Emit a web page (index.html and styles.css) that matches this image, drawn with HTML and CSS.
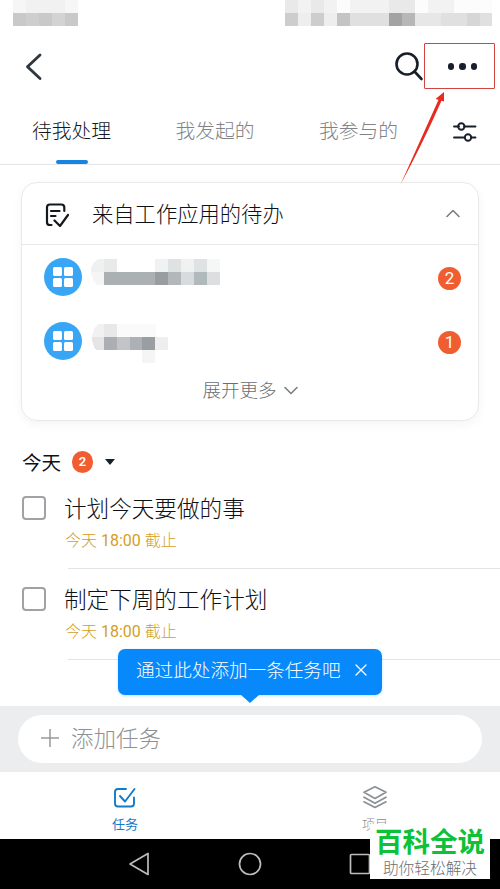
FILE: index.html
```html
<!DOCTYPE html>
<html lang="zh-CN">
<head>
<meta charset="utf-8">
<title>任务</title>
<link rel="stylesheet" href="styles.css">
</head>
<body>
<main class="phone">
  <header class="status">
    <svg class="status-left" width="65" height="26" shape-rendering="crispEdges">
      <path fill="#f6f6f6" d="M0 0h13v13H0zM52 0h13v13H52z"/><path fill="#f1f1f1" d="M13 0h39v13H13z"/>
      <path fill="#c9c9c9" d="M0 13h65v13H0z"/><path fill="#cecece" d="M13 13h13v13H13z"/><path fill="#d3d3d3" d="M39 13h13v13H39z"/>
    </svg>
    <svg class="status-right" width="207" height="26" shape-rendering="crispEdges">
      <path fill="#f2f2f2" d="M0 0h207v13H0z"/><path fill="#e9e9e9" d="M0 0h13v13H0zM26 0h13v13H26zM104 0h26v13h-26z"/><path fill="#fcfcfc" d="M52 0h13v13H52zM130 0h13v13h-13zM169 0h38v13h-38z"/>
      <path fill="#e0e0e0" d="M65 13h142v13H65z"/><path fill="#eee" d="M13 13h13v13H13zM39 13h13v13H39z"/><path fill="#cdcdcd" d="M0 13h13v13H0zM26 13h13v13H26z"/>
      <path fill="#c4c4c4" d="M52 13h13v13H52z"/><path fill="#a3a3a3" d="M104 13h13v13h-13z"/><path fill="#b7b7b7" d="M117 13h13v13h-13z"/><path fill="#e7e7e7" d="M130 13h26v13h-26z"/><path fill="#d6d6d6" d="M182 13h13v13h-13z"/>
    </svg>
  </header>

  <nav class="toolbar">
    <svg class="back" width="20" height="30" viewBox="0 0 20 30"><path d="M15 3 2.500 14.700 15 26.500"/></svg>
    <div class="actions">
      <svg class="search" width="30" height="30" viewBox="0 0 30 30"><circle cx="13" cy="13" r="10.500"/><path d="m20.500 20.500 7 7.500"/></svg>
      <div class="more"><i></i><i></i><i></i></div>
    </div>
    <svg class="arrow" width="50" height="96" viewBox="0 0 50 96"><path d="M44 26 35.500 33 38.500 33.700Q20 75 .5 118.500 23 77 41.500 34.800L44 35.500Z" transform="translate(0 -26)"/></svg>
  </nav>

  <div class="tabs">
    <span class="tab active">待我处理</span>
    <span class="tab">我发起的</span>
    <span class="tab">我参与的</span>
    <svg class="filter" width="24" height="24" viewBox="0 0 24 24"><path d="M1 6.500h5M11 6.500h11.500M1 17.500h10.500M18 17.500h4.500"/><circle cx="8.300" cy="6.500" r="3.200"/><circle cx="15" cy="17.500" r="3.200"/></svg>
  </div>

  <section class="card">
    <div class="card-head">
      <svg class="todo" width="24" height="26" viewBox="0 0 24 26"><path d="M6.500 23H4.800Q2 23 2 20.200V5.300Q2 2.500 4.800 2.500H16.300Q19.300 2.500 19.300 5.300V9M6 9h8.500M6 14h4.500M9.500 18.500l5.500 5.500L23 13"/></svg>
      <h1>来自工作应用的待办</h1>
      <svg class="chev" width="14" height="9" viewBox="0 0 14 9"><path d="M1 7.500 7 1.500l6 6"/></svg>
    </div>
    <div class="app">
      <span class="app-icon"><i></i><i></i><i></i><i></i></span>
      <svg class="mosaic" width="129" height="39" viewBox="0 0 129 39" shape-rendering="crispEdges">
        <path fill="#eff0f0" d="M13 0H8Q0 3 0 13h13z"/><path fill="#f5f5f5" d="M0 13h13v13H6Q1 22 0 13z"/><path fill="#e8e9e9" d="M13 0h13v13H13z"/><path fill="#f0f1f1" d="M64 0h13v13H64zM90 0h13v13H90z"/><path fill="#dfe2e3" d="M77 0h13v13H77zM103 0h13v13h-13z"/><path fill="#f5f6f6" d="M116 0h13v13h-13z"/>
        <path fill="#abb0b3" d="M13 13h51v13H13z"/><path fill="#999d9f" d="M64 13h13v13H64z"/><path fill="#b2b7ba" d="M77 13h13v13H77z"/><path fill="#d7dbdd" d="M90 13h13v13H90z"/><path fill="#b0babd" d="M103 13h13v13h-13z"/><path fill="#dcdedf" d="M116 13h13v13h-13z"/>
      </svg>
      <b class="count">2</b>
    </div>
    <div class="app">
      <span class="app-icon"><i></i><i></i><i></i><i></i></span>
      <svg class="mosaic second" width="129" height="39" viewBox="0 0 129 39" shape-rendering="crispEdges">
        <path fill="#f1f1f1" d="M13 0H8Q2 3 1 13h12z"/><path fill="#e8e8e8" d="M13 0h13v13H13z"/><path fill="#fafafa" d="M26 0h39v13H26z"/>
        <path fill="#e5e5e6" d="M1 13h12v13H5Q1 21 1 13z"/><path fill="#abaeb2" d="M13 13h13v13H13z"/><path fill="#c2c4c7" d="M26 13h13v13H26z"/><path fill="#adb0b4" d="M39 13h12v13H39z"/><path fill="#9a9da2" d="M51 13h13v13H51z"/><path fill="#eee" d="M64 13h13v13H64z"/><path fill="#f5f5f6" d="M51 26h13v13H51z"/>
      </svg>
      <b class="count">1</b>
    </div>
    <div class="expand">展开更多<svg class="chev" width="14" height="9" viewBox="0 0 14 9"><path d="m1 1.500 6 6 6-6"/></svg></div>
  </section>

  <section class="tasks">
    <div class="today"><h2>今天</h2><b class="today-count">2</b><i class="caret"></i></div>
    <article class="task"><i class="box"></i><div class="task-body"><h3>计划今天要做的事</h3><p>今天 <span>18:00</span> 截止</p></div></article>
    <article class="task"><i class="box"></i><div class="task-body"><h3>制定下周的工作计划</h3><p>今天 <span>18:00</span> 截止</p></div></article>
  </section>

  <section class="composer">
    <div class="input"><svg width="20" height="20" viewBox="0 0 20 20"><path d="M10 1v18M1 10h18"/></svg><span>添加任务</span></div>
    <div class="tip">通过此处添加一条任务吧<svg width="12" height="12" viewBox="0 0 12 12"><path d="m1 1 10 10M11 1 1 11"/></svg></div>
  </section>

  <nav class="bottom">
    <div class="item on"><svg width="26" height="26" viewBox="0 0 26 26"><path d="M14 4H6Q3 4 3 7v11.500Q3 21.500 6 21.500H19Q22 21.500 22 18.500V12.500M8 11l5 5.500L22.500 4"/></svg>任务</div>
    <div class="item"><svg width="26" height="26" viewBox="0 0 26 26"><path d="M13 1.800 24 7.300 13 13.500 2 7.300ZM2 12.200l11 6 11-6M2 16.800l11 5.700 11-5.700"/></svg>项目</div>
  </nav>

  <footer class="system">
    <svg width="24" height="24" viewBox="0 0 24 24"><path d="M20 1.500v21L2 12Z"/></svg>
    <svg width="24" height="24" viewBox="0 0 24 24"><circle cx="12" cy="12" r="10.500"/></svg>
    <svg width="24" height="24" viewBox="0 0 24 24"><rect x="2.500" y="2.500" width="19" height="19" rx="1"/></svg>
    <div class="mark"><strong>百科全说</strong><span>助你轻松解决</span></div>
  </footer>
</main>
</body>
</html>
```

FILE: styles.css
```css
* { box-sizing: border-box; }
body { margin: 0; background: #fff; font-family: Roboto, "Noto Sans CJK SC", sans-serif; font-weight: 300; color: #0d1116; }
h1, h2, h3, p { margin: 0; font-weight: inherit; }
svg { display: block; flex: none; fill: none; stroke-linecap: round; stroke-linejoin: round; }
.phone { width: 500px; height: 889px; display: flex; flex-direction: column; overflow: hidden; }

.status { height: 26px; display: flex; justify-content: space-between; padding: 0 8px 0 13px; }
.toolbar { position: relative; height: 78px; display: flex; justify-content: space-between; padding: 17px 5px 0 25px; }
.back { margin-top: 9px; stroke: #30373d; stroke-width: 2.9; }
.actions { display: flex; }
.search { margin-top: 8px; stroke: #17202a; stroke-width: 2.6; }
.more { width: 71px; height: 46px; border: 1.500px solid #d24440; border-radius: 1px; display: flex; align-items: center; justify-content: center; gap: 5px; padding: 1px 0 0 6px; }
.more i { width: 6.500px; height: 6.500px; border-radius: 50%; background: #17202a; }
.arrow { position: absolute; left: 400px; top: 66px; z-index: 3; }
.arrow path { fill: #e62b20; }

.tabs { height: 61px; border-bottom: 1px solid #e5e6e7; display: flex; padding: 0 24px 0 32px; font-size: 19.800px; line-height: 56px; }
.tab { width: 79.200px; margin-right: 64.300px; color: #808387; white-space: nowrap; }
.tab.active { color: #14191e; display: flex; flex-direction: column; align-items: center; }
.tab.active::after { content: ""; width: 32px; height: 4px; border-radius: 2px; background: #1785df; margin-top: 0; }
.filter { margin: 16px 0 0 -9px; stroke: #17202a; stroke-width: 1.900; }

.card { width: 458px; height: 239px; margin: 17px 0 0 21px; border: 1.500px solid #e8e9eb; border-radius: 16px; box-shadow: 0 3px 10px rgba(30, 40, 50, .05); }
.card-head { height: 62px; border-bottom: 1px solid #e7e8e9; display: flex; align-items: center; padding: 0 18px 0 23px; }
.todo { margin-top: 3px; stroke: #14191d; stroke-width: 2.200; }
.card-head h1 { font-size: 21.300px; margin: -2px 0 0 23px; flex: 1; }
.chev { stroke: #777b80; stroke-width: 1.500; }
.app { height: 64px; display: flex; align-items: center; padding: 0 17px 0 22px; }
.app-icon { width: 38px; height: 38px; border-radius: 50%; background: #38a6f5; display: grid; grid-template-columns: 9px 9px; grid-auto-rows: 9px; gap: 1.500px; place-content: center; }
.app-icon i { background: #fff; border-radius: 1.500px; }
.mosaic { margin: 3px auto 0 9px; }
.mosaic.second { margin-top: 5px; }
.count { width: 23px; height: 23px; margin-top: 3px; border-radius: 50%; background: #f05d30; color: #fff; font-size: 17px; font-weight: 400; line-height: 23px; text-align: center; }
.expand { display: flex; align-items: center; justify-content: center; gap: 7px; height: 32px; color: #6a6d71; font-size: 18.500px; }
.expand .chev { margin-top: 4px; }

.tasks { height: 286px; padding: 25px 0 0 22px; }
.today { height: 32px; display: flex; align-items: center; }
.today h2 { font-size: 19.500px; font-weight: 400; }
.today-count { width: 21px; height: 22px; margin-left: 11px; border-radius: 10.500px; background: #f05d30; color: #fff; font-size: 13px; font-weight: 600; line-height: 22px; text-align: center; }
.caret { margin-left: 12px; border: 5px solid transparent; border-top: 6px solid #17202a; border-bottom: 0; }
.task { height: 91px; display: flex; }
.box { width: 24px; height: 24px; margin-top: 18px; border: 2px solid #a0a2a5; border-radius: 4px; }
.task-body { width: 432px; margin-left: 22px; background: linear-gradient(#e3e4e5, #e3e4e5) 0 100% / 100% 1px no-repeat; }
.task-body h3 { height: 37px; margin-left: -4px; padding-top: 15px; font-size: 22.600px; line-height: 33px; }
.task-body p { margin: 14px 0 0 -3px; font-size: 16px; line-height: 24px; color: #d3a01c; }
.task-body p span { font-weight: 400; }

.composer { position: relative; height: 66px; padding: 9px 18px; background: #ebedef; }
.input { height: 48px; border-radius: 24px; background: #fff; display: flex; align-items: center; gap: 11px; padding: 0 0 2px 22px; color: #8f9195; font-size: 22.500px; }
.input span { margin-top: -2px; }
.input svg { stroke: #96999c; stroke-width: 1.500; stroke-linecap: butt; }
.tip { position: absolute; left: 118px; top: -57px; width: 264px; height: 46px; border-radius: 7px; background: #0788fb; color: #fff; display: flex; align-items: center; justify-content: space-between; padding: 0 15px 8px 18px; font-size: 18.600px; white-space: nowrap; box-shadow: 0 1px 3px rgba(7, 136, 251, .25); }
.tip svg { margin-top: 4px; stroke: #fff; stroke-width: 1.300; }
.tip::after { content: ""; position: absolute; left: 122px; top: 45px; border: 10px solid transparent; border-top: 9px solid #0788fb; border-bottom: 0; }

.bottom { height: 67px; display: flex; }
.item { width: 250px; padding-top: 13px; display: flex; flex-direction: column; align-items: center; gap: 4px; color: #8b8e92; font-size: 13px; line-height: 20px; }
.item svg { stroke: #8b9095; stroke-width: 1.700; }
.item.on { color: #147bc8; font-weight: 400; }
.item.on svg { stroke: #147bc8; stroke-width: 1.900; }
.system { position: relative; height: 50px; background: #000; display: flex; justify-content: center; align-items: center; gap: 86px; }
.system svg { stroke: #bcbcbc; stroke-width: 1.700; }
.mark { position: absolute; left: 370px; top: -15px; width: 120px; height: 55px; background: #fff; display: flex; flex-direction: column; align-items: center; white-space: nowrap; }
.mark strong { font-size: 27.500px; line-height: 38px; height: 35px; font-weight: 700; color: #0cc238; }
.mark span { font-size: 15.700px; line-height: 19px; color: #6c6e71; }
```
